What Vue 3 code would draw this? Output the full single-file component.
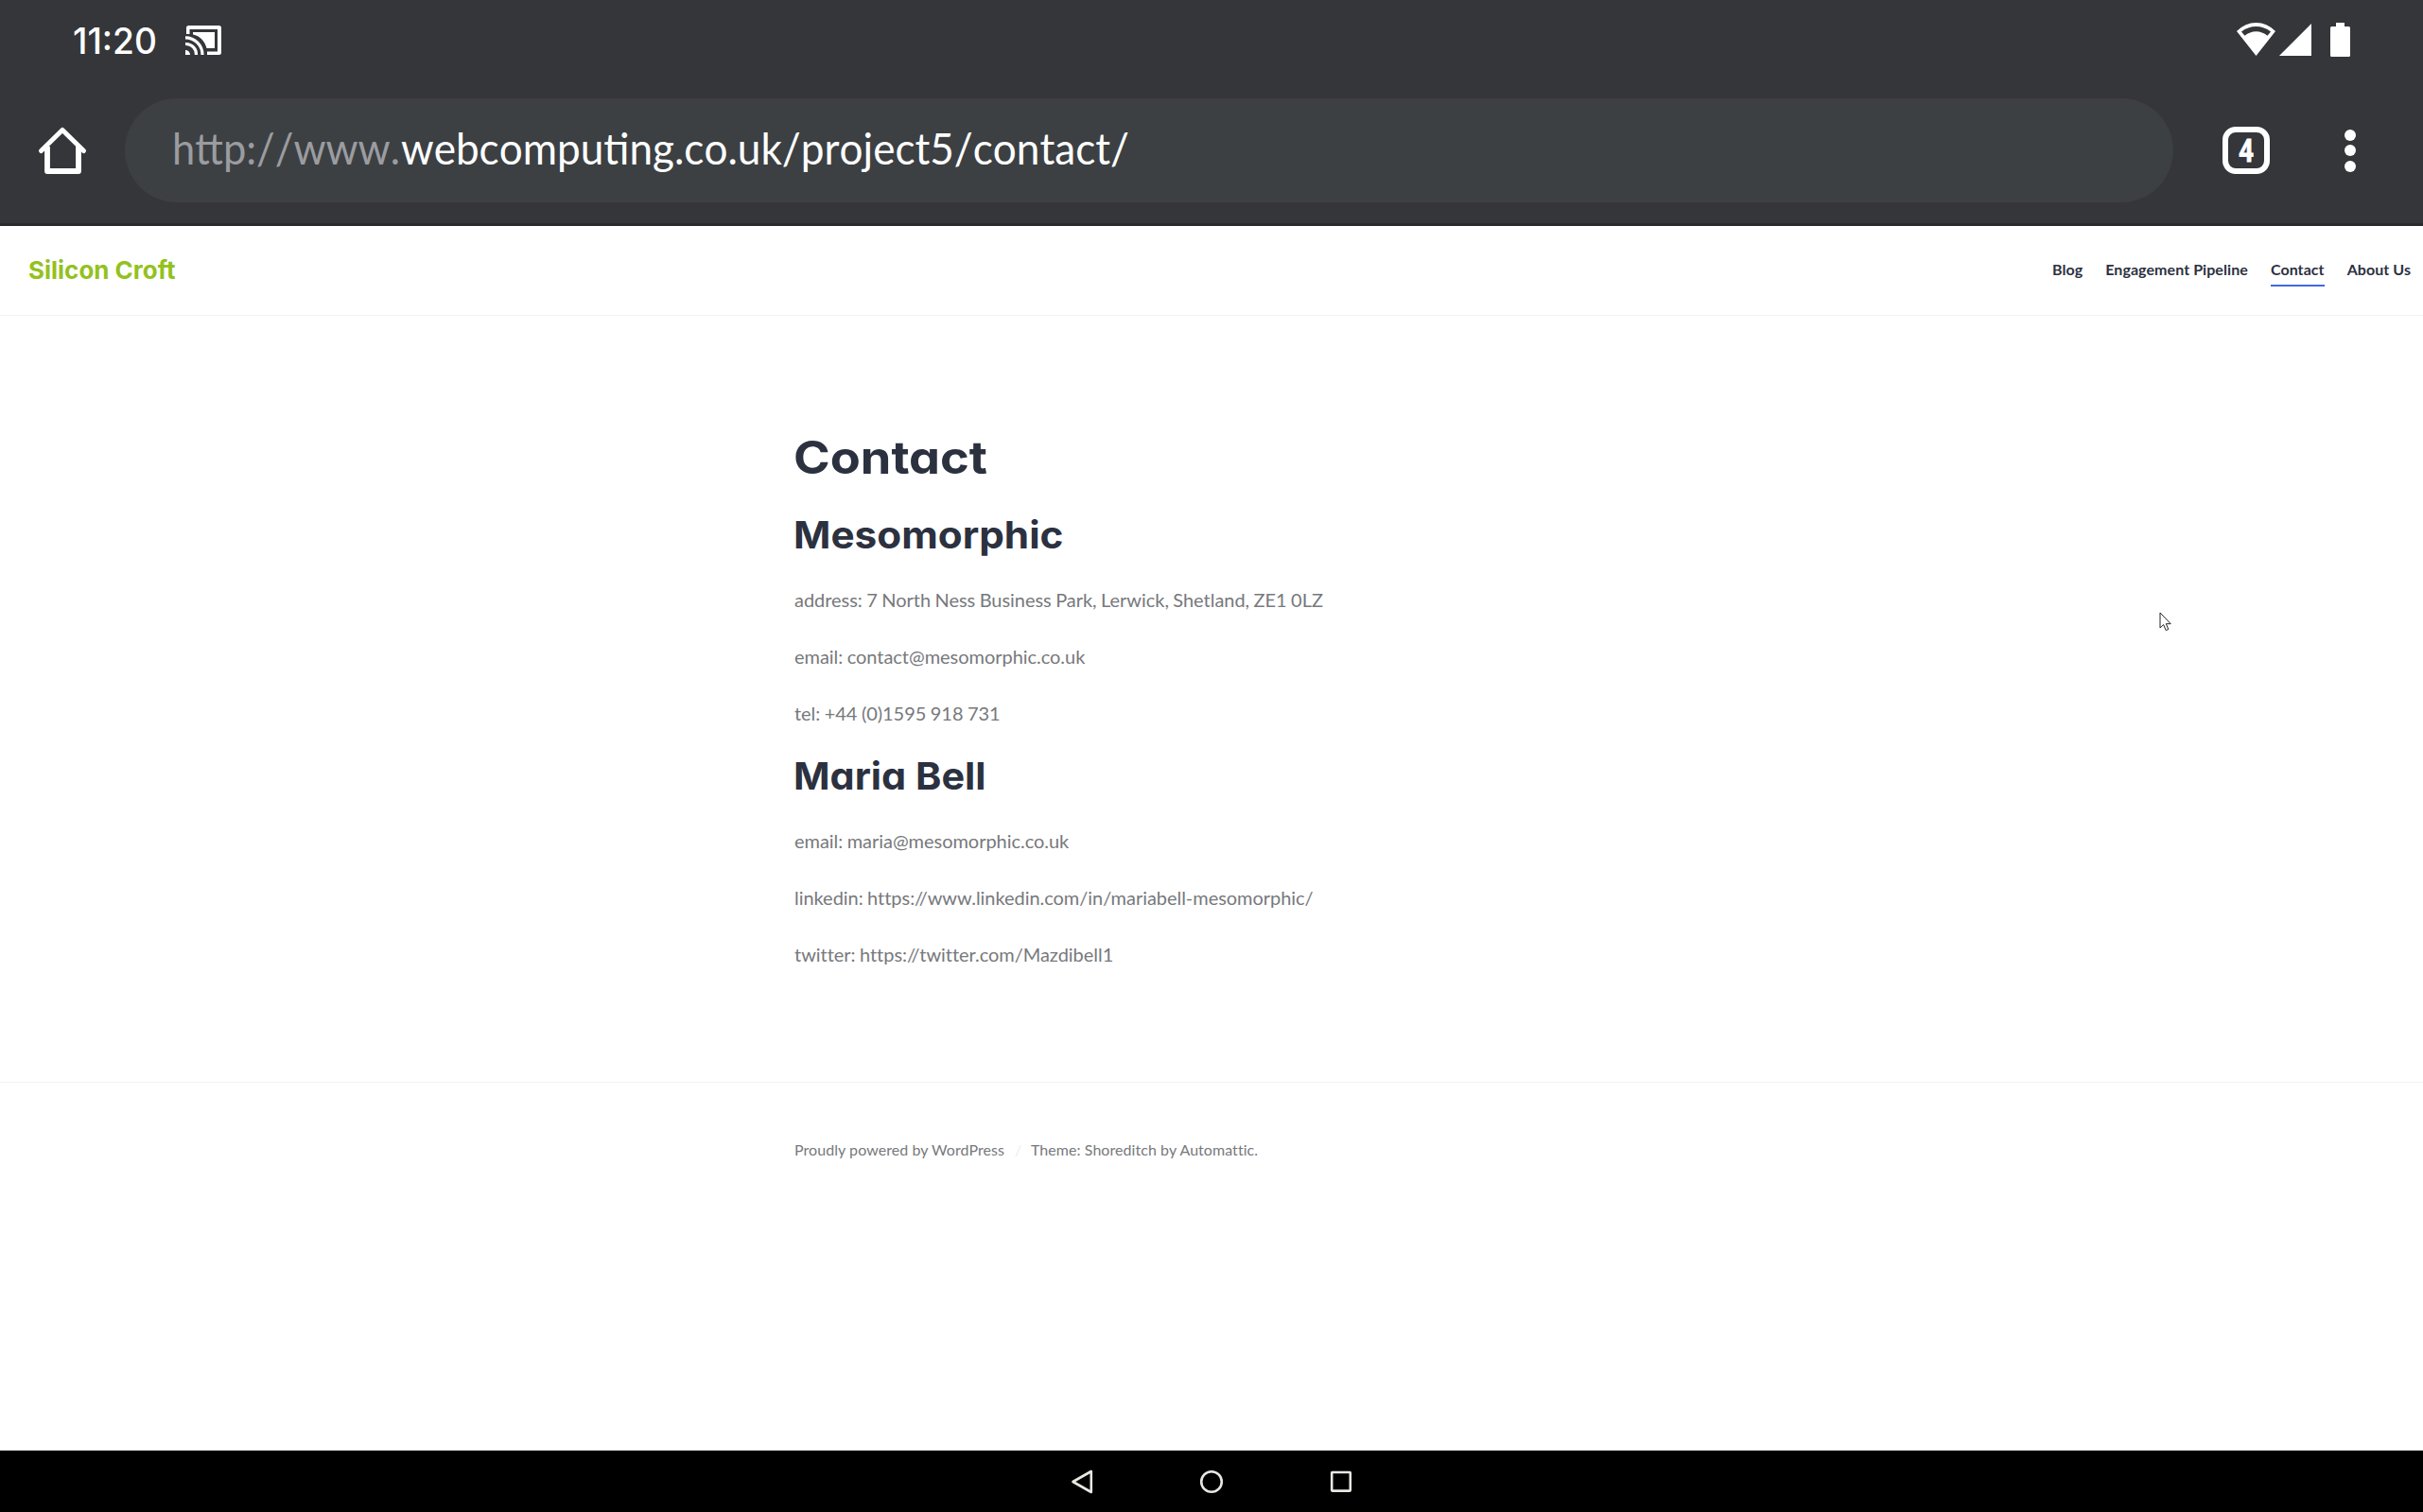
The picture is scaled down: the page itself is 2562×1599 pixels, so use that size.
<script setup>
const navItems = [
  { label: 'Blog' },
  { label: 'Engagement Pipeline' },
  { label: 'Contact', active: true },
  { label: 'About Us' },
]

const people = [
  {
    name: 'Mesomorphic',
    width: 282,
    lines: [
      'address: 7 North Ness Business Park, Lerwick, Shetland, ZE1 0LZ',
      'email: contact@mesomorphic.co.uk',
      'tel: +44 (0)1595 918 731',
    ],
  },
  {
    name: 'Maria Bell',
    width: 200,
    lines: [
      'email: maria@mesomorphic.co.uk',
      'linkedin: https://www.linkedin.com/in/mariabell-mesomorphic/',
      'twitter: https://twitter.com/Mazdibell1',
    ],
  },
]
</script>

<template>
  <div class="screen">
    <div class="chrome">
      <div class="status">
        <svg class="clock" width="88" height="40" viewBox="0 0 88 40">
          <text x="-2" y="34" textLength="89" lengthAdjust="spacingAndGlyphs">11:20</text>
        </svg>
        <svg class="cast" width="38" height="31" viewBox="0 0 38 31" fill="#fff">
          <path d="M1 9V2.500Q1 0 3.500 0H35.500Q38 0 38 2.500V28.500Q38 31 35.500 31H23V27.500H34V4H4.500V9Z" />
          <path d="M8 7H31V24H22.500C20.500 16.500 15.500 11 8 9.500Z" />
          <path d="M0 26A5 5 0 0 1 5 31H0Z" />
          <path d="M0 19.500A11 11 0 0 1 11.500 31M0 12.800A18 18 0 0 1 18 31" fill="none" stroke="#fff" stroke-width="3.200" />
        </svg>
        <div class="signals">
          <svg width="41" height="36" viewBox="0 0 41 36">
            <path fill="#fff" fill-rule="evenodd" d="M0 9Q9 0 20.500 0T41 9L20.500 35ZM5 9.500L8.500 13.800Q14 9.200 20.500 9.200T32.500 13.800L36 9.500Q29 4 20.500 4T5 9.500Z" />
          </svg>
          <svg class="cell" width="34" height="34" viewBox="0 0 34 34"><path fill="#fff" d="M34 0V34H0Z" /></svg>
          <svg class="battery" width="21" height="36" viewBox="0 0 21 36">
            <path fill="#fff" d="M6 0H15V4H19.500Q21 4 21 5.500V34.500Q21 36 19.500 36H1.500Q0 36 0 34.500V5.500Q0 4 1.500 4H6Z" />
          </svg>
        </div>
      </div>
      <div class="toolbar">
        <svg class="home" width="50" height="50" viewBox="0 0 50 50" fill="none" stroke="#fff" stroke-width="5.800" stroke-linejoin="round">
          <path d="M2.500 25.500L25 3.500L47.500 25.500" stroke-linecap="round" stroke-width="5" />
          <path d="M9 21V47H42V21" />
        </svg>
        <div class="address">
          <svg class="url" width="1020" height="70" viewBox="0 0 1020 70">
            <text class="scheme" x="-3" y="49.500" textLength="241" lengthAdjust="spacingAndGlyphs">http://www.</text>
            <text x="239" y="49.500" textLength="770" lengthAdjust="spacingAndGlyphs">webcomputing.co.uk/project5/contact/</text>
          </svg>
        </div>
        <div class="tabs">
          <svg width="18" height="28" viewBox="0 0 18 28">
            <text x="1" y="26" textLength="16" lengthAdjust="spacingAndGlyphs">4</text>
          </svg>
        </div>
        <div class="more"><i></i><i></i><i></i></div>
      </div>
    </div>

    <header class="site-header">
      <svg class="brand" width="160" height="40" viewBox="0 0 160 40">
        <text x="-1" y="30.500" textLength="155.500" lengthAdjust="spacingAndGlyphs">Silicon Croft</text>
      </svg>
      <nav>
        <a v-for="item in navItems" :key="item.label" :class="{ active: item.active }">{{ item.label }}</a>
      </nav>
    </header>

    <main>
      <h1>
        <svg width="300" height="60" viewBox="0 0 300 60">
          <text x="-1" y="45" textLength="205" lengthAdjust="spacingAndGlyphs">Contact</text>
        </svg>
      </h1>
      <section v-for="person in people" :key="person.name">
        <h2>
          <svg width="400" height="52" viewBox="0 0 400 52">
            <text x="-1" y="38" :textLength="person.width + 3.5" lengthAdjust="spacingAndGlyphs">{{ person.name }}</text>
          </svg>
        </h2>
        <p v-for="line in person.lines" :key="line">{{ line }}</p>
      </section>
    </main>

    <footer>
      <span>Proudly powered by WordPress</span>
      <span class="sep">/</span>
      <span>Theme: Shoreditch by Automattic.</span>
    </footer>

    <div class="system-nav">
      <svg width="26" height="28" viewBox="0 0 26 28"><path d="M3.500 14L22.800 3V25Z" /></svg>
      <svg width="26" height="28" viewBox="0 0 26 28"><circle cx="13" cy="14" r="10.800" /></svg>
      <svg width="26" height="28" viewBox="0 0 26 28"><rect x="3.200" y="4" width="19.600" height="19.600" rx=".5" /></svg>
    </div>

    <svg class="cursor" width="14" height="22" viewBox="0 0 14 22">
      <path d="M1 1V17L4.600 13.600L7.200 19.600L9.800 18.500L7.300 12.700H12.200Z" fill="#fff" stroke="#23232b" stroke-width="1" />
    </svg>
  </div>
</template>

<style>
body { background: #fff; }
</style>

<style scoped>
.screen {
  position: relative;
  display: flex;
  flex-direction: column;
  width: 2562px;
  height: 1599px;
  overflow: hidden;
  background: #fff;
  font-family: Lato, "Liberation Sans", sans-serif;
}
svg { display: block; flex: none; overflow: visible; }
.chrome {
  box-sizing: border-box;
  height: 239px;
  flex: none;
  background: #35363a;
  border-bottom: 3px solid #29292d;
}
.status { display: flex; align-items: flex-start; height: 104px; }
.clock { margin: 23px 0 0 79px; fill: #fff; font: 500 38px Inter, sans-serif; }
.cast { margin: 27px 0 0 29px; }
.signals { display: flex; align-items: flex-start; margin: 24px 77px 0 auto; }
.cell { margin: 1px 0 0 4px; }
.battery { margin-left: 20px; }
.toolbar { display: flex; align-items: center; height: 110px; }
.home { margin-left: 41px; }
.address {
  box-sizing: border-box;
  display: flex;
  align-items: center;
  width: 2166px;
  height: 110px;
  margin-left: 41px;
  padding-left: 53px;
  border: solid #3e3f43;
  border-width: 6px 0;
  border-radius: 55px;
  background: #3c4043;
}
.url { fill: #fff; font: 400 46px Lato, sans-serif; font-kerning: none; }
.url .scheme { fill: #9b9ca0; }
.tabs {
  box-sizing: border-box;
  display: flex;
  align-items: center;
  justify-content: center;
  width: 50px;
  height: 50px;
  margin-left: 52px;
  border: 6px solid #fff;
  border-radius: 14px;
  fill: #fff;
  stroke: #fff;
  stroke-width: .8px;
  font: 700 34px Roboto, sans-serif;
}
.more { display: flex; flex-direction: column; gap: 4.5px; margin-left: 79px; }
.more i { width: 12px; height: 12px; border-radius: 50%; background: #fff; }

.site-header {
  box-sizing: border-box;
  display: flex;
  flex: none;
  justify-content: space-between;
  align-items: flex-start;
  height: 95px;
  border-bottom: 1px solid #f1f2f2;
}
.brand { margin: 25px 0 0 31px; fill: #93c120; font: 700 26px Inter, sans-serif; font-feature-settings: "cv11"; }
nav { display: flex; gap: 24px; margin: 34px 13px 0 0; }
nav a {
  height: 28px;
  border-bottom: 2px solid transparent;
  color: #2c313f;
  font-size: 16px;
  font-weight: 700;
  letter-spacing: .07px;
  line-height: 24px;
}
nav a.active { border-color: #4169e1; }

main { flex: none; height: 810px; margin-left: 840px; }
h1, h2, p { margin: 0; }
h1 { height: 60px; padding-top: 122px; fill: #2c313f; font: 700 48px Inter, sans-serif; font-feature-settings: "cv11"; }
h2 { height: 52px; padding-top: 26px; fill: #2c313f; font: 700 40px Inter, sans-serif; font-feature-settings: "cv11"; }
section + section h2 { padding-top: 28px; }
section p {
  height: 30px;
  margin-bottom: 30px;
  color: #77797c;
  font-size: 20px;
  font-variant-ligatures: none;
  letter-spacing: -.04px;
  word-spacing: -.6px;
  line-height: 30px;
}
section h2 + p { margin-top: 25px; }
section p:last-child { margin-bottom: 0; }

footer {
  display: flex;
  flex: 1;
  align-items: flex-start;
  padding: 59px 0 0 840px;
  border-top: 1px solid #f1f2f2;
  color: #77797c;
  font-size: 16px;
  font-variant-ligatures: none;
  letter-spacing: .06px;
  line-height: 24px;
}
footer .sep { width: 6px; margin: 0 11px; color: #eceef0; }

.system-nav {
  display: flex;
  flex: none;
  align-items: flex-start;
  justify-content: center;
  gap: 111px;
  height: 65px;
  background: #000;
}
.system-nav svg { margin-top: 19px; fill: none; stroke: #e8e7e1; stroke-width: 2.6; stroke-linejoin: round; }
.cursor { position: absolute; left: 2283px; top: 647px; }
</style>
